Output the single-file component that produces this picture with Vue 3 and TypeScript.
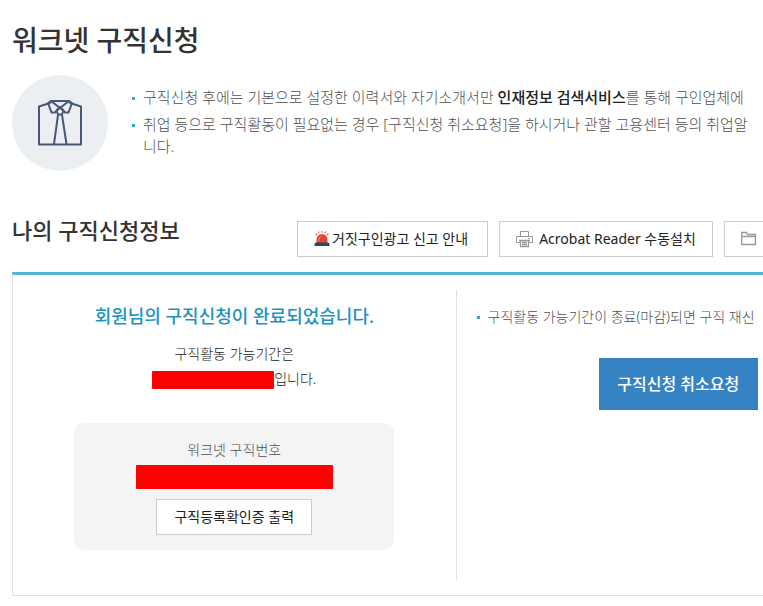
<script setup lang="ts">
interface Period {
  lead: string
  tail: string
}

const period: Period = { lead: '구직활동 가능기간은', tail: '입니다.' }
</script>

<template>
  <main class="page">
    <h1 class="page-title">워크넷 구직신청</h1>

    <section class="intro">
      <div class="badge">
        <svg viewBox="0 0 48 48" width="48" height="48" fill="none" stroke="#475875" stroke-width="2" stroke-linejoin="round" stroke-linecap="round" aria-hidden="true">
          <path d="M14 4 3 7.500V45.500H45V7.500L34 4" />
          <path d="M15 2H33L36 4 32.500 13.500H29L24 8.500 19 13.500H15.500L12 4Z" />
          <path d="M15 2 24 9 33 2" />
          <path d="M24 8 20.500 11.500 22 15.500H26L27.500 11.500Z" />
          <path d="M22 16 18 45M26 16 30.500 45" />
        </svg>
      </div>
      <ul class="notes intro-notes">
        <li>구직신청 후에는 기본으로 설정한 이력서와 자기소개서만 <strong>인재정보 검색서비스</strong>를 통해 구인업체에</li>
        <li>취업 등으로 구직활동이 필요없는 경우 [구직신청 취소요청]을 하시거나 관할 고용센터 등의 취업알<br />니다.</li>
      </ul>
    </section>

    <header class="section-head">
      <h2 class="section-title">나의 구직신청정보</h2>
      <div class="actions">
        <button type="button" class="btn report">
          <svg viewBox="0 0 16 16" width="16" height="16" aria-hidden="true">
            <path d="M2.500 12V8.500a5.500 5.500 0 0 1 11 0V12Z" fill="#e8452f" />
            <path d="M5 10V8Q5 6 7 5.500" fill="none" stroke="#ff8b75" stroke-width="1" />
            <path d="M2 11.500H14L15.500 12.500V15H.500V12.500Z" fill="#214c69" />
            <path d="M8 0V2M4.300 .500 5 2.200M11.700 .500 11 2.200M1.500 2.500 3 4M14.500 2.500 13 4" stroke="#ef6754" stroke-width="1.200" />
          </svg>
          <span>거짓구인광고 신고 안내</span>
        </button>
        <button type="button" class="btn reader">
          <svg viewBox="0 0 17 17" width="17" height="17" fill="none" stroke="#999" aria-hidden="true">
            <path d="M4.500 5.500V.500H12.500V5.500" />
            <path d="M4.500 11.500H.500V5.500H16.500V11.500H12.500" />
            <path d="M4.500 9.500H12.500V15.500H4.500ZM3 9.500H14M6 11.500H11M6 13.500H11" stroke-width="1.300" />
            <path d="M12 7.500H14" />
          </svg>
          <span>Acrobat Reader 수동설치</span>
        </button>
        <button type="button" class="btn folder" aria-label="폴더">
          <svg viewBox="0 0 16 16" width="16" height="16" fill="none" stroke="#999" stroke-width="1.300" aria-hidden="true">
            <path d="M.700 13.500V1.500H5.500L6.500 3.500H14.500V13.500ZM.700 5.500H14.500" />
          </svg>
        </button>
      </div>
    </header>

    <section class="panel">
      <div class="status">
        <h3 class="status-title">회원님의 구직신청이 완료되었습니다.</h3>
        <p class="period">
          {{ period.lead }}<br />
          <span class="masked date"></span>{{ period.tail }}
        </p>
        <div class="number-card">
          <p class="number-label">워크넷 구직번호</p>
          <span class="masked number"></span>
          <button type="button" class="btn">구직등록확인증 출력</button>
        </div>
      </div>
      <div class="guide">
        <ul class="notes">
          <li>구직활동 가능기간이 종료(마감)되면 구직 재신</li>
        </ul>
        <button type="button" class="cancel">구직신청 취소요청</button>
      </div>
    </section>
  </main>
</template>

<style>
body {
  margin: 0;
  background: #fff;
}
</style>

<style scoped>
.page {
  box-sizing: border-box;
  overflow: hidden;
  padding: 20px 0 10px 12px;
  color: #333;
  font-family: "Noto Sans", "Noto Sans CJK KR", sans-serif;
  font-size: 14px;
  line-height: 24px;
}

h1, h2, h3, p, ul {
  margin: 0;
  padding: 0;
}

.page-title {
  font-size: 28px;
  font-weight: 500;
  line-height: 40px;
}

.intro {
  display: flex;
  gap: 24px;
  min-width: 888px;
  margin-top: 15px;
}

.badge {
  display: flex;
  flex: none;
  align-items: center;
  justify-content: center;
  width: 96px;
  height: 96px;
  border-radius: 50%;
  background: #ebeff2;
}

.notes {
  list-style: none;
  color: #505050;
  font-weight: 300;
  white-space: nowrap;
}

.notes li {
  position: relative;
  padding-left: 11px;
}

.notes li::before {
  content: "";
  position: absolute;
  top: 11px;
  left: 0;
  width: 3px;
  height: 3px;
  background: #2fa8d5;
}

.intro-notes {
  display: flex;
  flex-direction: column;
  gap: 5px;
  padding-top: 11px;
  font-size: 15px;
  line-height: 22px;
}

.intro-notes strong {
  color: #222;
  font-weight: 500;
}

.section-head {
  display: flex;
  justify-content: space-between;
  min-width: 889px;
  margin-top: 40px;
}

.section-title {
  font-size: 22px;
  font-weight: 500;
  line-height: 38px;
}

.actions {
  display: flex;
  gap: 11px;
  padding-top: 10px;
}

.btn {
  display: inline-flex;
  box-sizing: border-box;
  align-items: center;
  justify-content: center;
  height: 36px;
  padding: 0 16px;
  border: 1px solid #ccc;
  background: #fff;
  color: #222;
  font: inherit;
  font-weight: 400;
  white-space: nowrap;
}

.report {
  justify-content: flex-start;
  gap: 2px;
  min-width: 191px;
}

.reader {
  gap: 6px;
  min-width: 214px;
}

.folder {
  justify-content: flex-start;
  min-width: 177px;
}

.panel {
  display: grid;
  grid-template-columns: 1fr 1fr;
  min-width: 887px;
  margin-top: 15px;
  padding: 15px 0;
  border: 1px solid #e2e2e2;
  border-top: 3px solid #54b6d5;
}

.status {
  display: flex;
  flex-direction: column;
  align-items: center;
  padding: 14px 0 30px;
  border-right: 1px solid #e2e2e2;
}

.status-title {
  color: #1b93bf;
  font-size: 18px;
  font-weight: 500;
  line-height: 24px;
}

.period {
  margin-top: 13px;
  color: #222;
  font-weight: 300;
  line-height: 25px;
  text-align: center;
}

.masked {
  display: inline-block;
  border-radius: 1px;
  background: #f00;
}

.date {
  width: 122px;
  height: 18px;
  vertical-align: middle;
}

.number-card {
  display: flex;
  box-sizing: border-box;
  flex-direction: column;
  align-items: center;
  width: 320px;
  margin-top: 32px;
  padding: 15px 16px;
  border-radius: 10px;
  background: #f4f4f4;
}

.number-label {
  color: #505050;
  font-weight: 300;
}

.number {
  width: 197px;
  height: 24px;
  margin: 3px 0 10px;
}

.number-card .btn {
  min-width: 156px;
}

.guide {
  display: flex;
  flex-direction: column;
  align-items: center;
  gap: 29px;
  padding: 15px 20px;
}

.guide .notes {
  align-self: stretch;
}

.cancel {
  min-width: 159px;
  height: 52px;
  padding: 0 16px;
  border: 0;
  background: #3683c4;
  color: #fff;
  font: inherit;
  font-size: 16px;
  font-weight: 500;
}
</style>
